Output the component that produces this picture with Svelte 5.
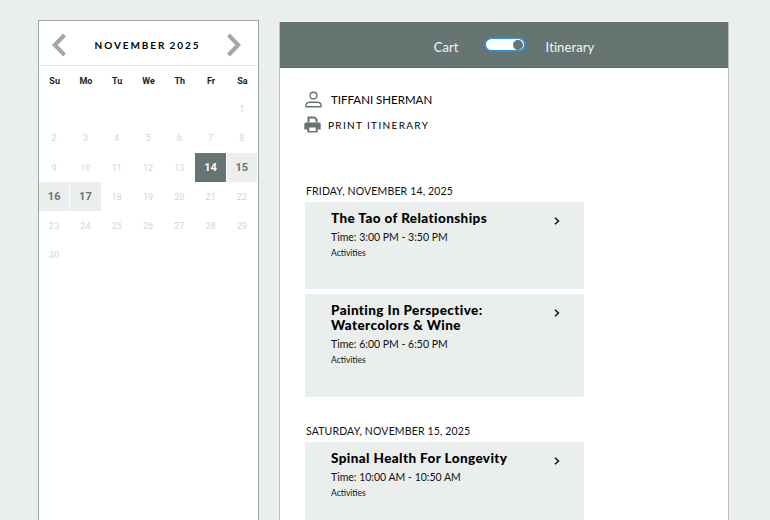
<script>
	const names = ['Su', 'Mo', 'Tu', 'We', 'Th', 'Fr', 'Sa'];
	const days = [...Array(6).fill(null), ...Array.from({ length: 30 }, (_, i) => i + 1)];
	const available = [15, 16, 17];

	const groups = [
		{
			date: 'FRIDAY, NOVEMBER 14, 2025',
			items: [
				{ title: 'The Tao of Relationships', time: '3:00 PM - 3:50 PM', h: 87 },
				{ title: 'Painting In Perspective: Watercolors & Wine', time: '6:00 PM - 6:50 PM', h: 103 }
			]
		},
		{
			date: 'SATURDAY, NOVEMBER 15, 2025',
			items: [{ title: 'Spinal Health For Longevity', time: '10:00 AM - 10:50 AM', h: 87 }]
		}
	];
</script>

<div class="page">
	<aside class="calendar">
		<div class="month">
			<svg class="nav" width="14" height="24" viewBox="0 0 14 24"><path d="M12.500 2 2.800 12l9.700 10" /></svg>
			<span class="label">NOVEMBER 2025</span>
			<svg class="nav" width="14" height="24" viewBox="0 0 14 24"><path d="M1.500 2l9.700 10-9.700 10" /></svg>
		</div>
		<div class="grid names">
			{#each names as n}<div>{n}</div>{/each}
		</div>
		<div class="grid days">
			{#each days as d}
				<div class="day" class:today={d === 14} class:open={available.includes(d)}>{d ?? ''}</div>
			{/each}
		</div>
	</aside>

	<main class="panel">
		<header class="bar">
			<span>Cart</span>
			<span class="toggle"><i></i></span>
			<span class="right">Itinerary</span>
		</header>
		<div class="body">
			<div class="who">
				<svg width="17" height="17" viewBox="0 0 17 17" fill="none" stroke="#677572" stroke-width="1.4">
					<circle cx="8.5" cy="4.6" r="3.4" />
					<path d="M1 15.800v-1.600c0-1.900 2-3 4-3h7c2 0 4 1.100 4 3v1.600z" />
				</svg>
				<span>TIFFANI SHERMAN</span>
			</div>
			<div class="print">
				<svg width="17" height="17" viewBox="0 0 17 17" fill="#677572">
					<path d="M3.500 0.500h7.500l2.500 2.500v3.500h-2V3.800l-1-1.200H5.500v3.900h-2z" />
					<path d="M2 6.500h13c1 0 1.700 0.700 1.700 1.700v5.300h-3v3h-10.400v-3h-3V8.200c0-1 0.700-1.700 1.700-1.700zM5.300 11.500v3.400h6.400v-3.400z" fill-rule="evenodd" />
				</svg>
				<span>PRINT ITINERARY</span>
			</div>

			{#each groups as g}
				<section>
					<h2>{g.date}</h2>
					{#each g.items as item}
						<article style="height: {item.h}px">
							<div class="text">
								<h3>{item.title}</h3>
								<p class="time">Time: {item.time}</p>
								<p class="cat">Activities</p>
							</div>
							<svg class="chev" width="6" height="8" viewBox="0 0 6 8"><path d="M1 .8 4.500 4 1 7.200" /></svg>
						</article>
					{/each}
				</section>
			{/each}
		</div>
	</main>
</div>

<style>
	:global(body) {
		background: #eaeeed;
		overflow: hidden;
	}

	.page {
		display: flex;
		align-items: flex-start;
		gap: 20px;
		height: 520px;
		padding: 20px 0 0 38px;
		box-sizing: border-box;
		font-family: 'Lato', 'Liberation Sans', sans-serif;
		overflow: hidden;
	}

	.calendar {
		width: 221px;
		height: 520px;
		flex: none;
		box-sizing: border-box;
		background: #fff;
		border: 1px solid #9aa5a2;
	}

	.month {
		display: flex;
		align-items: center;
		justify-content: space-between;
		height: 45px;
		padding: 3px 17px 0 13px;
		box-sizing: border-box;
		border-bottom: 1px solid #e4e7e6;
		font-size: 10px;
		font-weight: 700;
		letter-spacing: 1.900px;
		word-spacing: -1px;
		color: #000;
	}

	.label {
		margin-left: 2px;
	}

	.nav path {
		fill: none;
		stroke: #a6a6a6;
		stroke-width: 4;
	}

	.grid {
		display: grid;
		grid-template-columns: repeat(7, 1fr);
		font-family: 'Roboto', sans-serif;
		text-align: center;
	}

	.names {
		height: 28.700px;
		padding-top: 2px;
		box-sizing: border-box;
		align-items: center;
		font-size: 9px;
		font-weight: 700;
		color: #222;
	}

	.days {
		grid-auto-rows: 29.200px;
		font-size: 9px;
		color: #d4d6d6;
	}

	.day {
		display: flex;
		align-items: center;
		justify-content: center;
		margin-right: 1px;
	}

	.open {
		background: #eaeeed;
		font-size: 11px;
		font-weight: 700;
		color: #677572;
	}

	.today {
		background: #677572;
		font-size: 11px;
		font-weight: 700;
		color: #fff;
	}

	.panel {
		width: 450px;
		height: 500px;
		flex: none;
		margin-top: 2px;
		box-sizing: border-box;
		background: #fff;
		border-left: 1px solid #b9c1bf;
		border-right: 1px solid #b9c1bf;
	}

	.bar {
		display: flex;
		align-items: center;
		justify-content: center;
		gap: 25px;
		height: 46px;
		padding-left: 20px;
		background: #677572;
		border-bottom: 1px solid #5b6763;
		box-sizing: border-box;
		font-size: 13px;
		letter-spacing: 0.1px;
		color: #f4f6f5;
	}

	.bar span:not(.toggle) {
		padding-top: 4px;
	}

	.right {
		margin-left: -5px;
	}

	.toggle {
		display: flex;
		align-items: center;
		justify-content: flex-end;
		width: 42px;
		height: 15px;
		box-sizing: border-box;
		padding: 0 1px;
		border: 2px solid #2f8fcf;
		border-radius: 8px;
		background: #fff;
	}

	.toggle i {
		width: 10px;
		height: 10px;
		border-radius: 50%;
		background: #677572;
	}

	.body {
		padding: 23px 0 0 25px;
	}

	.who,
	.print {
		display: flex;
		align-items: center;
		color: #000;
	}

	.who {
		gap: 9px;
		font-size: 11.500px;
	}

	.print {
		gap: 7px;
		margin: 8px 0 0 -1px;
		font-size: 10px;
		letter-spacing: 1.350px;
	}

	section {
		margin-top: 52px;
	}

	section + section {
		margin-top: 28.400px;
	}

	h2 {
		margin: 0 0 4px 1px;
		font-size: 10.500px;
		font-weight: 400;
		letter-spacing: 0.150px;
		line-height: 13px;
		color: #111;
	}

	article {
		display: flex;
		justify-content: space-between;
		width: 279px;
		box-sizing: border-box;
		margin-bottom: 5px;
		padding: 9px 24px 0 26px;
		background: #eaeeed;
	}

	.text {
		width: 190px;
	}

	h3 {
		margin: 0;
		font-size: 13.500px;
		font-weight: 900;
		letter-spacing: 0.400px;
		line-height: 15px;
		color: #000;
	}

	.time {
		margin: 4px 0 0;
		font-size: 10.500px;
		line-height: 14px;
		color: #111;
	}

	.cat {
		margin: 4px 0 0;
		font-size: 8.500px;
		line-height: 11px;
		color: #111;
	}

	.chev {
		margin-top: 6px;
	}

	.chev path {
		fill: none;
		stroke: #000;
		stroke-width: 1.300;
	}
</style>
